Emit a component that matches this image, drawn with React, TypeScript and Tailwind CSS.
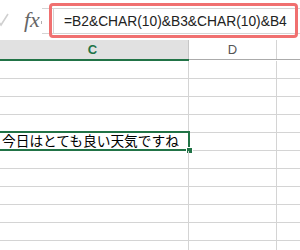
import React from "react";

const ROWS = 11;
const SELECTED = 4;

export default function App() {
  return (
    <div className="w-[300px] h-[250px] bg-white overflow-hidden font-['Liberation_Sans',sans-serif]">
      {/* Formula bar */}
      <div className="flex h-[40px]">
        <div className="w-[22px] flex items-start">
          <svg width="12" height="16" viewBox="0 0 12 16" className="mt-[12px] -ml-[3px]">
            <path d="M1 9 L4 13 L11 2" fill="none" stroke="#d0d0d0" strokeWidth="1.6" />
          </svg>
        </div>
        <div className="w-[20px] flex items-start pl-[2px] pt-[9px]">
          <span className="font-['Liberation_Serif',serif] italic text-[22px] leading-[22px] text-[#666]">
            fx
          </span>
        </div>
        <div className="flex-1 relative">
          <div className="mt-[8px] h-[26px] border-y border-[#d4d4d4] flex">
            <div className="w-[1px] h-[3px] bg-[#b0b0b0] -ml-[1px] mt-[12px]" />
            <div className="ml-[11px] flex-1 border-l border-[#d4d4d4] pl-[10px] pt-[5px]">
              <div className="text-[13.8px] leading-[16px] text-[#222] whitespace-nowrap">
                =B2&amp;CHAR(10)&amp;B3&amp;CHAR(10)&amp;B4
              </div>
            </div>
          </div>
          <div className="absolute left-[7px] top-[3px] w-[249px] h-[35px] border-[3px] border-[#f07070] rounded-[4px]" />
        </div>
      </div>

      {/* Column headers */}
      <div className="flex h-[21px] -ml-[3px]">
        <div className="w-[192px] flex flex-col">
          <div className="flex-1 bg-[#e1e1e1] border-r border-[#c6c6c6] flex items-center justify-center">
            <span className="text-[13px] font-bold text-[#217346] leading-[13px]">C</span>
          </div>
          <div className="h-[2px] bg-[#217346]" />
        </div>
        <div className="w-[88px] flex flex-col">
          <div className="flex-1 bg-white border-r border-[#d4d4d4] flex items-center justify-center">
            <span className="text-[13px] text-[#555] leading-[13px]">D</span>
          </div>
          <div className="h-[1px] bg-[#ababab]" />
          <div className="h-[1px] bg-white" />
        </div>
        <div className="flex-1 flex flex-col">
          <div className="flex-1 bg-white" />
          <div className="h-[1px] bg-[#ababab]" />
          <div className="h-[1px] bg-white" />
        </div>
      </div>

      {/* Rows */}
      <div className="flex flex-col -ml-[3px]">
        {Array.from({ length: ROWS }).map((_, i) => (
          <div key={i} className="flex h-[18px] border-b border-[#d4d4d4] relative">
            <div className="w-[192px] border-r border-[#d4d4d4] pl-[5px]">
              {i === SELECTED && (
                <div className="font-['Noto_Sans_CJK_JP',sans-serif] text-[13.7px] leading-[13px] text-black whitespace-nowrap pt-[1px]">
                  今日はとても良い天気ですね
                </div>
              )}
            </div>
            <div className="w-[88px] border-r border-[#d4d4d4]" />
            <div className="flex-1" />
            {i === SELECTED && (
              <>
                <div className="absolute left-[-4px] top-[-2px] w-[197px] h-[20px] border-2 border-[#217346]" />
                <div className="absolute left-[189px] top-[14px] w-[7px] h-[7px] bg-white p-[1px]">
                  <div className="w-full h-full bg-[#217346]" />
                </div>
              </>
            )}
          </div>
        ))}
      </div>
    </div>
  );
}
